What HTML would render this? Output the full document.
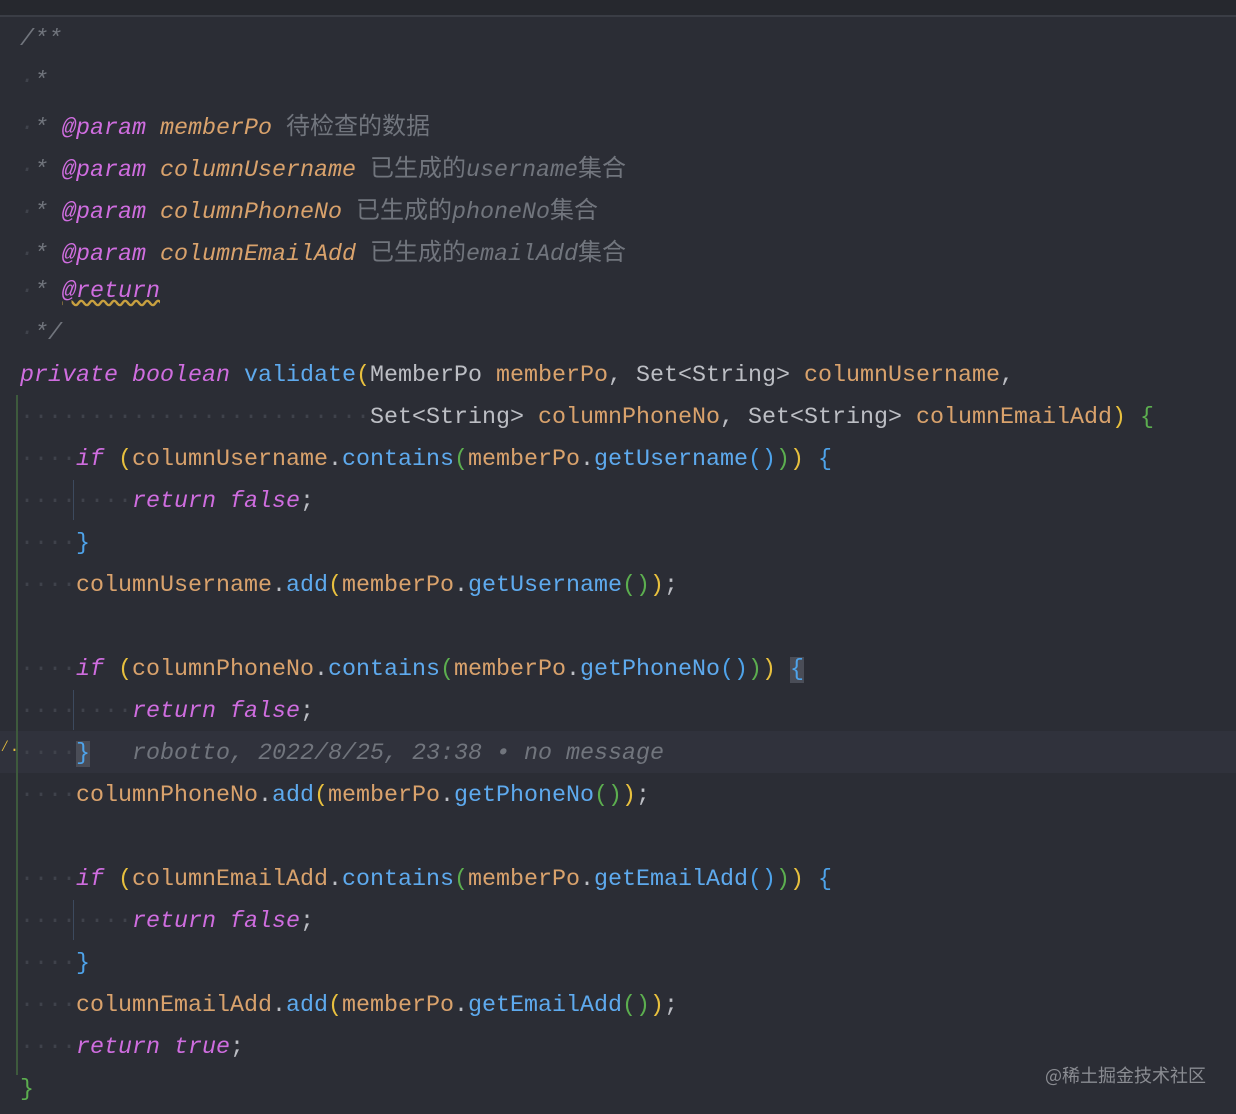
<!DOCTYPE html>
<html><head><meta charset="utf-8"><style>
body{margin:0;width:1236px;height:1114px;background:#2b2d35;overflow:hidden;position:relative;font-family:"Liberation Mono","Noto Sans CJK SC",monospace;font-size:23.33px;color:#bcbec4}
.top{position:absolute;left:0;top:0;width:1236px;height:15px;background:#26282e;border-bottom:2px solid #3a3d45}
.l{position:absolute;left:20px;height:42px;line-height:46px;white-space:pre}
.k{color:#cf6ddf;font-style:italic}
.o{color:#d9a26c}
.oi{color:#d9a26c;font-style:italic}
.f{color:#5eaaee}
.y{color:#e8c03e}
.g{color:#5cae4f}
.b{color:#4ea3ea}
.c{color:#71757d;font-style:italic}
.d{color:#3f424b}
.cj{font-style:normal;font-family:"Noto Sans CJK SC",sans-serif;font-size:24px}
.hl{position:absolute;left:0;top:731px;width:1236px;height:42px;background:#30323c}
.gut{position:absolute;left:16px;top:395px;width:2px;height:680px;background:#3e5a3d}
.wm{position:absolute;left:1045px;top:1062px;font-family:"Noto Sans CJK SC",sans-serif;font-size:18px;color:#8a8c92}
.bx{background:#4a4d57}
.ig{position:absolute;width:1px;background:#3d4a5e}
</style></head><body>
<div class="top"></div>
<div class="hl"></div>
<div class="gut"></div>
<div class="ig" style="left:73px;top:480px;height:40px"></div>
<div class="ig" style="left:73px;top:690px;height:40px"></div>
<div class="ig" style="left:73px;top:900px;height:40px"></div>
<div class="l c" style="top:17px">/**</div>
<div class="l c" style="top:59px"><span class="d">·</span>*</div>
<div class="l c" style="top:101px"><span class="d">·</span>* <span class="k">@param</span> <span class="oi">memberPo</span> <span class="cj">待检查的数据</span></div>
<div class="l c" style="top:143px"><span class="d">·</span>* <span class="k">@param</span> <span class="oi">columnUsername</span> <span class="cj">已生成的</span>username<span class="cj">集合</span></div>
<div class="l c" style="top:185px"><span class="d">·</span>* <span class="k">@param</span> <span class="oi">columnPhoneNo</span> <span class="cj">已生成的</span>phoneNo<span class="cj">集合</span></div>
<div class="l c" style="top:227px"><span class="d">·</span>* <span class="k">@param</span> <span class="oi">columnEmailAdd</span> <span class="cj">已生成的</span>emailAdd<span class="cj">集合</span></div>
<div class="l c" style="top:269px"><span class="d">·</span>* <span class="k" style="text-decoration:underline wavy #c8a040">@return</span></div>
<div class="l c" style="top:311px"><span class="d">·</span>*/</div>
<div class="l" style="top:353px"><span class="k">private</span> <span class="k">boolean</span> <span class="f">validate</span><span class="y">(</span>MemberPo <span class="o">memberPo</span>, Set&lt;String&gt; <span class="o">columnUsername</span>,</div>
<div class="l" style="top:395px"><span class="d">·························</span>Set&lt;String&gt; <span class="o">columnPhoneNo</span>, Set&lt;String&gt; <span class="o">columnEmailAdd</span><span class="y">)</span> <span class="g">{</span></div>
<div class="l" style="top:437px"><span class="d">····</span><span class="k">if</span> <span class="y">(</span><span class="o">columnUsername</span>.<span class="f">contains</span><span class="g">(</span><span class="o">memberPo</span>.<span class="f">getUsername</span><span class="b">()</span><span class="g">)</span><span class="y">)</span> <span class="b">{</span></div>
<div class="l" style="top:479px"><span class="d">········</span><span class="k">return</span> <span class="k">false</span>;</div>
<div class="l" style="top:521px"><span class="d">····</span><span class="b">}</span></div>
<div class="l" style="top:563px"><span class="d">····</span><span class="o">columnUsername</span>.<span class="f">add</span><span class="y">(</span><span class="o">memberPo</span>.<span class="f">getUsername</span><span class="g">()</span><span class="y">)</span>;</div>
<div class="l" style="top:647px"><span class="d">····</span><span class="k">if</span> <span class="y">(</span><span class="o">columnPhoneNo</span>.<span class="f">contains</span><span class="g">(</span><span class="o">memberPo</span>.<span class="f">getPhoneNo</span><span class="b">()</span><span class="g">)</span><span class="y">)</span> <span class="b bx">{</span></div>
<div class="l" style="top:689px"><span class="d">········</span><span class="k">return</span> <span class="k">false</span>;</div>
<div class="l" style="top:731px"><span class="d">····</span><span class="b bx">}</span>   <span class="c">robotto, 2022/8/25, 23:38 • no message</span></div>
<div class="l" style="top:773px"><span class="d">····</span><span class="o">columnPhoneNo</span>.<span class="f">add</span><span class="y">(</span><span class="o">memberPo</span>.<span class="f">getPhoneNo</span><span class="g">()</span><span class="y">)</span>;</div>
<div class="l" style="top:857px"><span class="d">····</span><span class="k">if</span> <span class="y">(</span><span class="o">columnEmailAdd</span>.<span class="f">contains</span><span class="g">(</span><span class="o">memberPo</span>.<span class="f">getEmailAdd</span><span class="b">()</span><span class="g">)</span><span class="y">)</span> <span class="b">{</span></div>
<div class="l" style="top:899px"><span class="d">········</span><span class="k">return</span> <span class="k">false</span>;</div>
<div class="l" style="top:941px"><span class="d">····</span><span class="b">}</span></div>
<div class="l" style="top:983px"><span class="d">····</span><span class="o">columnEmailAdd</span>.<span class="f">add</span><span class="y">(</span><span class="o">memberPo</span>.<span class="f">getEmailAdd</span><span class="g">()</span><span class="y">)</span>;</div>
<div class="l" style="top:1025px"><span class="d">····</span><span class="k">return</span> <span class="k">true</span>;</div>
<div class="l" style="top:1067px"><span class="g">}</span></div>
<div style="position:absolute;left:0;top:738px;color:#e8c03e;font-size:16px">⁄.</div>
<div class="wm">@稀土掘金技术社区</div>
</body></html>
